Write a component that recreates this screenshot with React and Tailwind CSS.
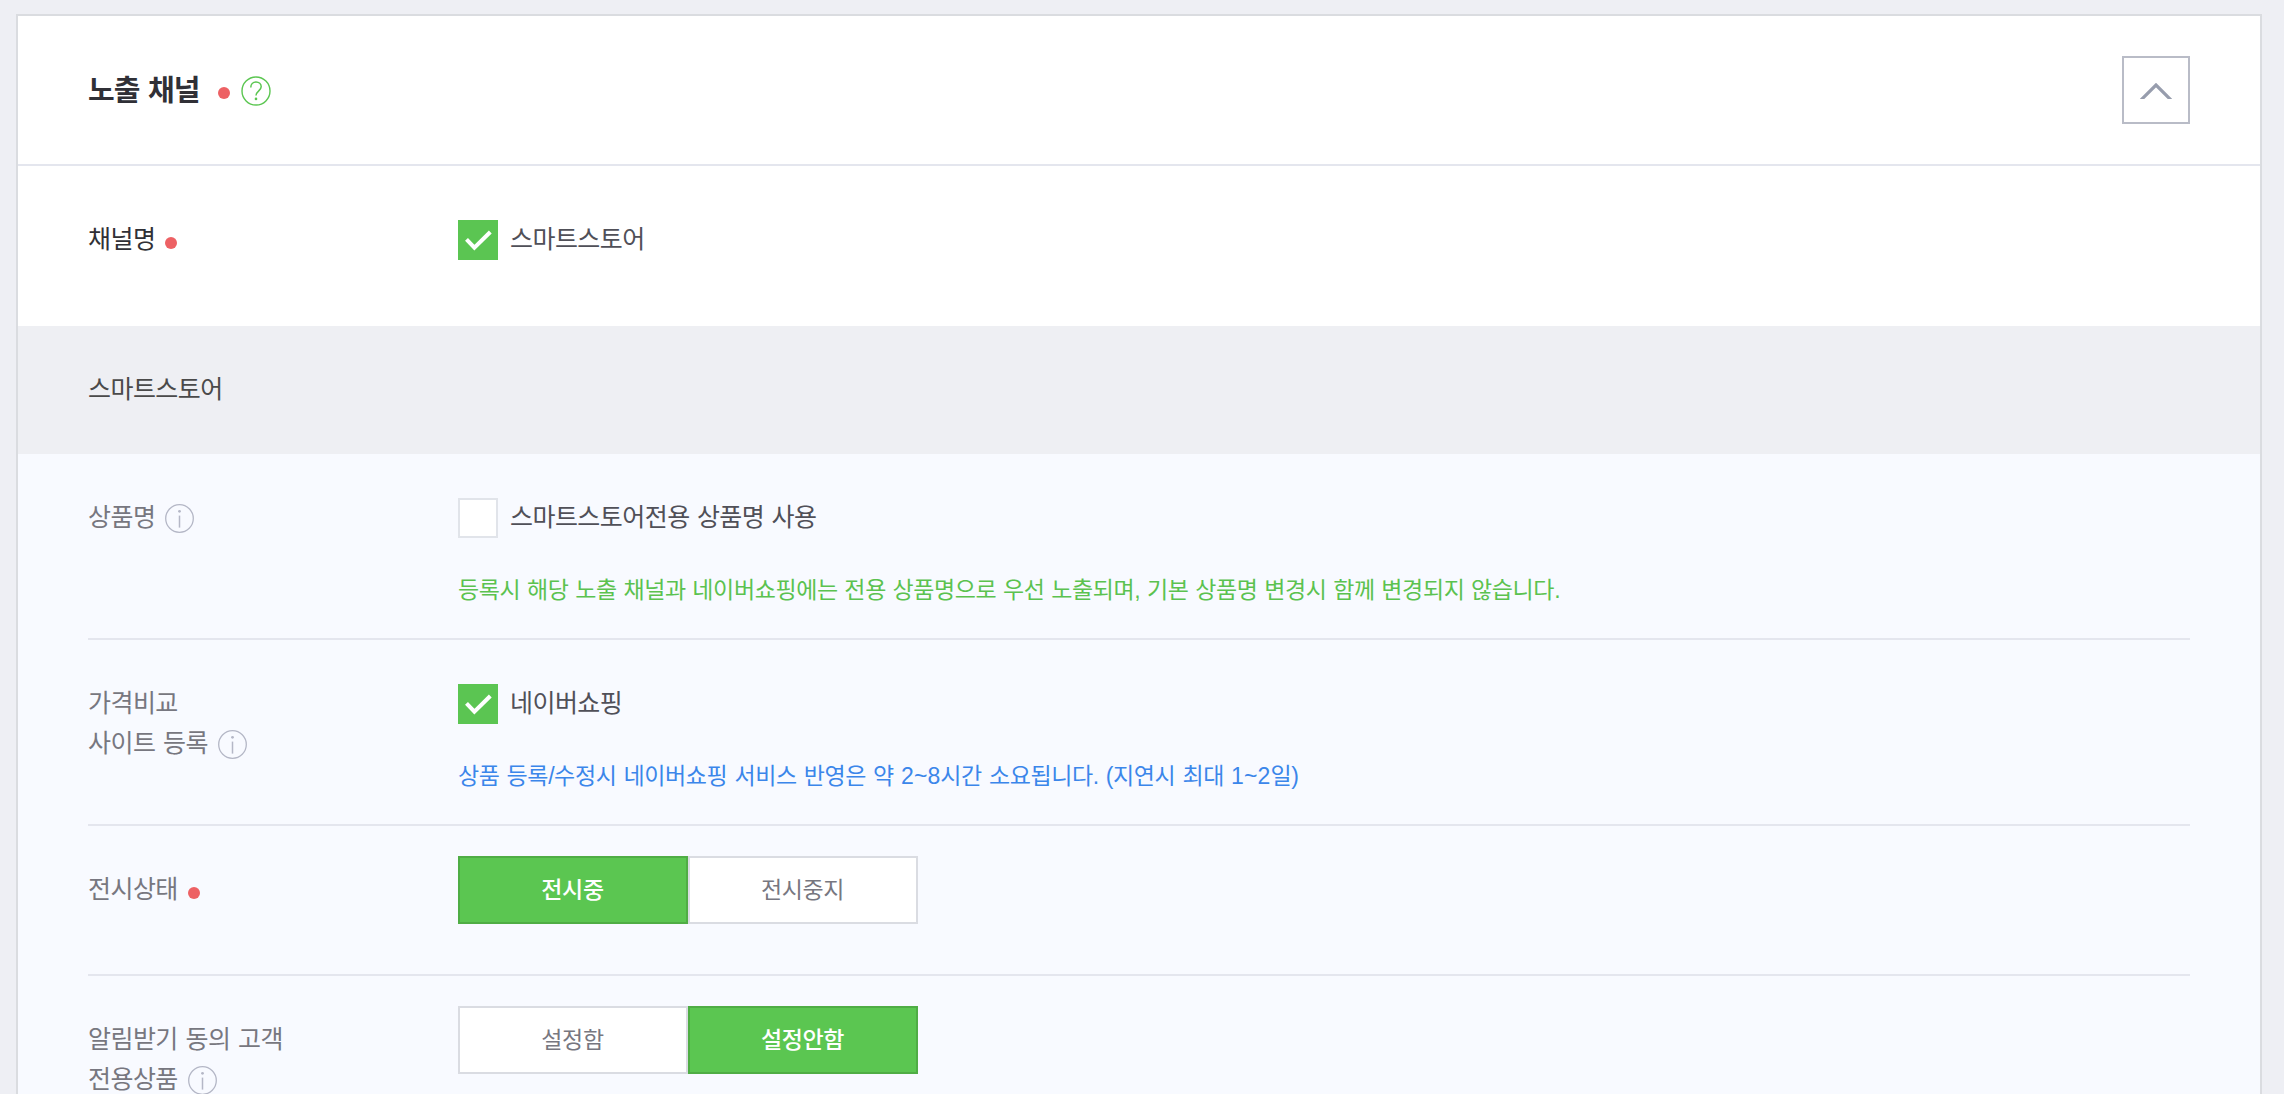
import React from "react";

function RequiredDot() {
    return <span className="mt-1.5 ml-2.5 size-3 shrink-0 rounded-full bg-[#ed6164]"></span>;
}

function InfoIcon() {
    return (
        <svg className="mt-px ml-2.5 size-[29px] shrink-0" viewBox="0 0 29 29" fill="none">
            <circle cx="14.5" cy="14.5" r="13.8" stroke="#b4b7c6" strokeWidth="1.3" />
            <circle cx="14.5" cy="7.3" r="1.4" fill="#b4b7c6" />
            <path d="M14.5 11.6V23.6" stroke="#b4b7c6" strokeWidth="1.5" />
        </svg>
    );
}

function HelpIcon() {
    return (
        <svg className="mt-0.5 ml-[11px] size-[30px] shrink-0" viewBox="0 0 30 30" fill="none">
            <circle cx="15" cy="15" r="14" stroke="#5bc651" strokeWidth="1.4" />
            <path d="M9.8 11.4C9.8 8.2 11.9 6 15 6C18 6 20.2 8 20.2 10.8C20.2 14.6 15 15.2 15 19.6" stroke="#5bc651" strokeWidth="1.5" />
            <circle cx="15" cy="22.9" r="1.3" fill="#5bc651" />
        </svg>
    );
}

function CheckBox({ checked, label }) {
    return (
        <div className="flex h-10 items-center">
            {checked ? (
                <svg className="size-10 shrink-0 bg-[#5bc552]" viewBox="0 0 40 40" fill="none">
                    <path d="M8.5 19.3L16.4 27.7L32.3 12" stroke="#fff" strokeWidth="4" />
                </svg>
            ) : (
                <span className="size-10 shrink-0 border-2 border-[#e1e4ea] bg-white"></span>
            )}
            <span className="ml-3 pb-0.5 text-[25px] leading-10 tracking-[-0.55px] [word-spacing:0.9px] text-[#505058]">{label}</span>
        </div>
    );
}

function Toggle({ options, selected }) {
    return (
        <div className="flex -mt-[14px]">
            {options.map((option) => (
                <button
                    key={option}
                    className={
                        option === selected
                            ? "h-[68px] w-[230px] border-2 border-[#4fad45] bg-[#5bc651] pr-px text-[23px] font-medium tracking-[-0.4px] text-white"
                            : "h-[68px] w-[230px] border-2 border-[#dadce2] bg-white pr-px text-[23px] tracking-[-0.4px] text-[#777780]"
                    }
                >
                    {option}
                </button>
            ))}
        </div>
    );
}

// Label column on the left, controls on the right
function Row({ lines, mark, children, className }) {
    return (
        <div className={"flex border-b-2 border-[#e4e6ee] pt-11 " + className}>
            <div className="w-[370px] shrink-0 text-[25px] leading-10 tracking-[-0.55px] [word-spacing:1.3px] text-[#777780]">
                {lines.map((line, i) => (
                    <div key={line} className="flex h-10 items-center">
                        <span className="pb-0.5">{line}</span>
                        {i === lines.length - 1 && mark}
                    </div>
                ))}
            </div>
            <div>{children}</div>
        </div>
    );
}

export default function App() {
    return (
        <div className="h-[1094px] overflow-hidden bg-[#eeeff4] pt-3.5 pl-4 font-['Liberation_Sans','Noto_Sans_CJK_KR',sans-serif]">
            <div className="h-[1100px] w-[2246px] border-2 border-[#dadce0] bg-white">
                {/* Header */}
                <div className="flex h-[150px] items-center justify-between border-b-2 border-[#e4e6ee] px-[70px]">
                    <div className="flex items-center">
                        <h2 className="pt-px text-[29px] font-bold leading-10 tracking-[-0.9px] [word-spacing:1.3px] text-[#303036]">노출 채널</h2>
                        <span className="mt-1.5 ml-[18.5px] size-3 rounded-full bg-[#ed6164]"></span>
                        <HelpIcon />
                    </div>
                    <button className="flex size-[68px] items-center justify-center border-2 border-[#b9bcc7]">
                        <svg className="mt-0.5 h-4 w-8" viewBox="0 0 32 16" fill="none">
                            <path d="M1 17L16 2L31 17" stroke="#979dad" strokeWidth="3.2" />
                        </svg>
                    </button>
                </div>

                {/* Channel name */}
                <div className="flex h-40 px-[70px] pt-[54px]">
                    <div className="flex h-10 w-[370px] items-center text-[25px] leading-10 tracking-[-0.55px] text-[#303036]">
                        <span className="pb-0.5">채널명</span>
                        <RequiredDot />
                    </div>
                    <CheckBox checked label="스마트스토어" />
                </div>

                <div className="flex h-32 items-center bg-[#eeeff3] px-[70px] text-[25px] leading-10 tracking-[-0.55px] text-[#4a4a4a]">
                    <span className="pb-0.5">스마트스토어</span>
                </div>

                {/* Smart store settings */}
                <div className="h-[640px] bg-[#f8faff] px-[70px]">
                    <Row lines={["상품명"]} mark={<InfoIcon />} className="h-[186px]">
                        <CheckBox label="스마트스토어전용 상품명 사용" />
                        <p className="mt-[34px] text-[23px] leading-9 tracking-[-0.4px] [word-spacing:0.7px] text-[#5bc24f]">
                            등록시 해당 노출 채널과 네이버쇼핑에는 전용 상품명으로 우선 노출되며, 기본 상품명 변경시 함께 변경되지 않습니다.
                        </p>
                    </Row>
                    <Row lines={["가격비교", "사이트 등록"]} mark={<InfoIcon />} className="h-[186px]">
                        <CheckBox checked label="네이버쇼핑" />
                        <p className="mt-[34px] text-[23px] leading-9 tracking-[-0.4px] [word-spacing:1.1px] text-[#3b86ea]">
                            상품 등록/수정시 네이버쇼핑 서비스 반영은 약 <span className="tracking-[0.1px]">2~8</span>시간 소요됩니다. (지연시 최대{" "}
                            <span className="tracking-[0.1px]">1~2</span>일)
                        </p>
                    </Row>
                    <Row lines={["전시상태"]} mark={<RequiredDot />} className="h-[150px]">
                        <Toggle options={["전시중", "전시중지"]} selected="전시중" />
                    </Row>
                    <Row lines={["알림받기 동의 고객", "전용상품"]} mark={<InfoIcon />} className="h-[186px]">
                        <Toggle options={["설정함", "설정안함"]} selected="설정안함" />
                    </Row>
                </div>
            </div>
        </div>
    );
}
